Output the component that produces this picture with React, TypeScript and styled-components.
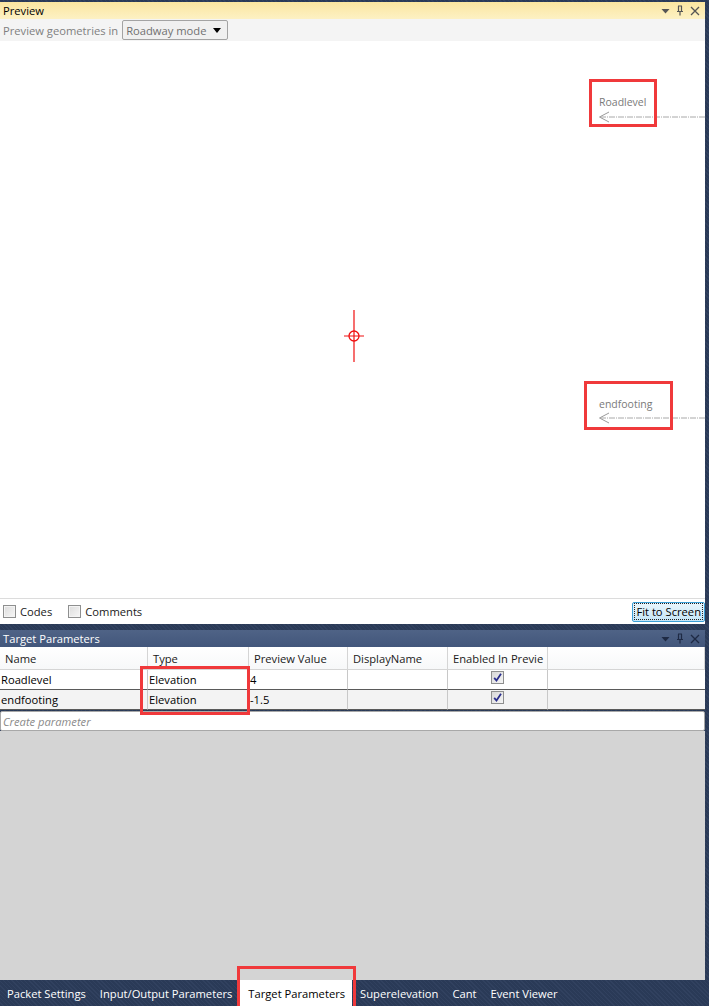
import styled, { createGlobalStyle } from "styled-components";

const GlobalStyle = createGlobalStyle`
  html, body {
    margin: 0;
    padding: 0;
    background: #293955;
  }
  body {
    font-family: "Open Sans", "Noto Sans", sans-serif;
    font-size: 11.2px;
  }
`;

const navy = `repeating-linear-gradient(45deg, #2a3a57 0px, #2a3a57 2px, #31415f 2px, #31415f 3px)`;

const Frame = styled.div`
  position: relative;
  width: 709px;
  height: 1006px;
  display: flex;
  flex-direction: column;
  background: ${navy};
  overflow: hidden;
`;

const Body = styled.div`
  flex: 1;
  display: flex;
  flex-direction: column;
  padding: 2px 4px 0 0;
  min-height: 0;
`;

const Panel = styled.section<{ $grow?: boolean }>`
  display: flex;
  flex-direction: column;
  flex: ${(p) => (p.$grow ? 1 : "none")};
  min-height: 0;
`;

const PanelHeader = styled.header<{ $active?: boolean }>`
  height: 17px;
  display: flex;
  align-items: center;
  padding-left: 3px;
  background: ${(p) =>
    p.$active
      ? "linear-gradient(#fbe6a0, #fdf1c4)"
      : "linear-gradient(#4f6386, #42567b)"};
  color: ${(p) => (p.$active ? "#000" : "#fff")};
  font-size: 11.2px;
`;

const HeaderTitle = styled.span`
  flex: 1;
`;

const HeaderIcons = styled.div`
  display: flex;
  align-items: center;
  gap: 6px;
  padding-right: 5px;
`;

const Toolbar = styled.div`
  height: 22px;
  display: flex;
  align-items: center;
  gap: 4px;
  padding-left: 3px;
  background: #f4f4f4;
  color: #808080;
  font-size: 11.2px;
`;

const Dropdown = styled.div`
  width: 106px;
  height: 20px;
  box-sizing: border-box;
  border: 1px solid #a3a3a3;
  border-radius: 2px;
  background: #f0f0f0;
  display: flex;
  align-items: center;
  justify-content: space-between;
  padding: 0 6px 0 3px;
  color: #707070;
  font-size: 11.2px;
`;

const Canvas = styled.div`
  position: relative;
  height: 557px;
  background: #fff;
`;

const TargetLabel = styled.span<{ $top: number }>`
  position: absolute;
  left: 599px;
  top: ${(p) => p.$top}px;
  color: #7a7a7a;
  font-size: 10.5px;
`;

const Pointer = styled.svg<{ $top: number }>`
  position: absolute;
  left: 598px;
  top: ${(p) => p.$top}px;
`;

const Crosshair = styled.svg`
  position: absolute;
  left: 343px;
  top: 269px;
`;

const BottomBar = styled.div`
  height: 25px;
  display: flex;
  align-items: center;
  gap: 16px;
  padding-left: 3px;
  background: #fff;
  border-top: 1px solid #dcdcdc;
  font-size: 11.2px;
  color: #1a1a1a;
`;

const CheckLabel = styled.label`
  display: flex;
  align-items: center;
  gap: 4px;
`;

const Box = styled.span`
  width: 11px;
  height: 11px;
  border: 1px solid #8e8f8f;
  background: linear-gradient(135deg, #dcdcdc, #f7f7f7);
  box-shadow: inset 0 0 0 1px #f4f4f4;
  display: inline-flex;
`;

const FitButton = styled.button`
  margin-left: auto;
  height: 20px;
  padding: 1px;
  border: 1px solid #3c9fd6;
  border-radius: 2px;
  background: linear-gradient(#eaf6fd, #c4e5f6);
  font-family: inherit;
  font-size: 11.2px;
  color: #000;
  display: flex;
  align-items: center;
`;

const FocusRing = styled.span`
  border: 1px dotted #222;
  padding: 0 1px;
  line-height: 15px;
`;

const PanelGap = styled.div`
  height: 6px;
`;

const Grid = styled.div`
  display: grid;
  grid-template-columns: 148px 101px 99px 100px 100px 1fr;
  background: #fff;
`;

const HeadCell = styled.div`
  height: 23px;
  box-sizing: border-box;
  display: flex;
  align-items: center;
  padding-left: 5px;
  border-right: 1px solid #d5d5d5;
  border-bottom: 1px solid #d5d5d5;
  background: linear-gradient(#fff, #f7f8f9);
  color: #1a1a1a;
  &:last-child {
    border-right: none;
  }
`;

const Cell = styled.div<{ $alt?: boolean; $center?: boolean }>`
  height: 20px;
  box-sizing: border-box;
  display: flex;
  align-items: center;
  justify-content: ${(p) => (p.$center ? "center" : "flex-start")};
  padding-left: ${(p) => (p.$center ? 0 : 1)}px;
  background: ${(p) => (p.$alt ? "#f3f3f3" : "#fff")};
  border-right: 1px solid #c8c8c8;
  border-bottom: 1px solid #5a5a5a;
  color: #000;
  &:nth-child(6n) {
    border-right: none;
  }
`;

const MiniCheck = styled.span`
  width: 11px;
  height: 11px;
  margin-top: -4px;
  border: 1px solid #8e8f8f;
  background: linear-gradient(135deg, #d8d8d8, #f5f5f5);
  display: inline-flex;
  align-items: center;
  justify-content: center;
`;

const CreateRow = styled.div`
  height: 20px;
  box-sizing: border-box;
  margin-top: 1px;
  border: 1px solid #a8a8a8;
  border-radius: 2px;
  background: #fff;
  display: flex;
  align-items: center;
  padding-left: 2px;
  color: #8a8a8a;
  font-style: italic;
`;

const GrayFill = styled.div`
  flex: 1;
  background: #d4d4d4;
`;

const TabBar = styled.nav`
  height: 26px;
  display: flex;
  align-items: stretch;
`;

const Tab = styled.div<{ $selected?: boolean }>`
  display: flex;
  align-items: center;
  background: ${(p) => (p.$selected ? "#fff" : "transparent")};
  color: ${(p) => (p.$selected ? "#000" : "#fff")};
  font-size: 11.2px;
  margin: ${(p) => (p.$selected ? "0 1px 0 0" : "0")};
  padding: ${(p) => (p.$selected ? "0 7px 0 9px" : "0 7px 0 7px")};
`;

const Callout = styled.div<{ $l: number; $t: number; $w: number; $h: number }>`
  position: absolute;
  left: ${(p) => p.$l}px;
  top: ${(p) => p.$t}px;
  width: ${(p) => p.$w}px;
  height: ${(p) => p.$h}px;
  box-sizing: border-box;
  border: 3px solid #f0393b;
  pointer-events: none;
`;

function PanelIcons({ dark }: { dark?: boolean }) {
  const c = dark ? "#1e2a44" : "#555";
  return (
    <HeaderIcons>
      <svg width="9" height="6" viewBox="0 0 9 6">
        <path d="M0.5 1 L8.5 1 L4.5 5.5 Z" fill={c} />
      </svg>
      <svg width="8" height="11" viewBox="0 0 8 11">
        <path d="M2 1 H6 M2.5 1 V6 M5.5 1 V6 M1 6.5 H7 M4 6.5 V10.5" stroke={c} strokeWidth="1.2" fill="none" />
      </svg>
      <svg width="10" height="10" viewBox="0 0 10 10">
        <path d="M1 1 L9 9 M9 1 L1 9" stroke={c} strokeWidth="1.3" />
      </svg>
    </HeaderIcons>
  );
}

function Tick() {
  return (
    <svg width="9" height="9" viewBox="0 0 9 9">
      <path d="M1.2 4.8 L3.5 7.5 L8 0.8" stroke="#2b2f8c" strokeWidth="1.8" fill="none" />
    </svg>
  );
}

function TargetPointer({ top }: { top: number }) {
  return (
    <Pointer $top={top} width="108" height="12" viewBox="0 0 108 12">
      <path d="M11 1 L1.5 6 L11 11" stroke="#9a9a9a" strokeWidth="1" fill="none" />
      <path d="M2 6 H108" stroke="#a8a8a8" strokeWidth="1" strokeDasharray="6 1 1 1" />
    </Pointer>
  );
}

const rows = [
  { name: "Roadlevel", type: "Elevation", value: "4" },
  { name: "endfooting", type: "Elevation", value: "-1.5" },
];

const tabs = [
  "Packet Settings",
  "Input/Output Parameters",
  "Target Parameters",
  "Superelevation",
  "Cant",
  "Event Viewer",
];

export default function App() {
  return (
    <Frame>
      <GlobalStyle />
      <Body>
        <Panel>
          <PanelHeader $active>
            <HeaderTitle>Preview</HeaderTitle>
            <PanelIcons />
          </PanelHeader>
          <Toolbar>
            Preview geometries in
            <Dropdown>
              Roadway mode
              <svg width="8" height="5" viewBox="0 0 8 5">
                <path d="M0 0 H8 L4 5 Z" fill="#000" />
              </svg>
            </Dropdown>
          </Toolbar>
          <Canvas>
            <TargetLabel $top={54}>Roadlevel</TargetLabel>
            <TargetPointer top={70} />
            <TargetLabel $top={356}>endfooting</TargetLabel>
            <TargetPointer top={371} />
            <Crosshair width="22" height="52" viewBox="0 0 22 52">
              <path d="M11 0 V52 M1 26 H21" stroke="#f01010" strokeWidth="1.2" />
              <circle cx="11" cy="26" r="5" stroke="#f01010" strokeWidth="1.3" fill="none" />
            </Crosshair>
          </Canvas>
          <BottomBar>
            <CheckLabel>
              <Box />
              Codes
            </CheckLabel>
            <CheckLabel>
              <Box />
              Comments
            </CheckLabel>
            <FitButton>
              <FocusRing>Fit to Screen</FocusRing>
            </FitButton>
          </BottomBar>
        </Panel>
        <PanelGap />
        <Panel $grow>
          <PanelHeader>
            <HeaderTitle>Target Parameters</HeaderTitle>
            <PanelIcons dark />
          </PanelHeader>
          <Grid>
            <HeadCell>Name</HeadCell>
            <HeadCell>Type</HeadCell>
            <HeadCell>Preview Value</HeadCell>
            <HeadCell>DisplayName</HeadCell>
            <HeadCell>Enabled In Previe</HeadCell>
            <HeadCell />
            {rows.flatMap((r, i) => {
              const alt = i % 2 === 1;
              return [
                <Cell key={r.name + "n"} $alt={alt}>{r.name}</Cell>,
                <Cell key={r.name + "t"} $alt={alt}>{r.type}</Cell>,
                <Cell key={r.name + "v"} $alt={alt}>{r.value}</Cell>,
                <Cell key={r.name + "d"} $alt={alt} />,
                <Cell key={r.name + "e"} $alt={alt} $center>
                  <MiniCheck>
                    <Tick />
                  </MiniCheck>
                </Cell>,
                <Cell key={r.name + "x"} $alt={alt} />,
              ];
            })}
          </Grid>
          <CreateRow>Create parameter</CreateRow>
          <GrayFill />
        </Panel>
      </Body>
      <TabBar>
        {tabs.map((t) => (
          <Tab key={t} $selected={t === "Target Parameters"}>
            {t}
          </Tab>
        ))}
      </TabBar>
      <Callout $l={589} $t={79} $w={68} $h={48} />
      <Callout $l={584} $t={381} $w={89} $h={49} />
      <Callout $l={140} $t={666} $w={110} $h={49} />
      <Callout $l={237} $t={966} $w={119} $h={44} />
    </Frame>
  );
}
